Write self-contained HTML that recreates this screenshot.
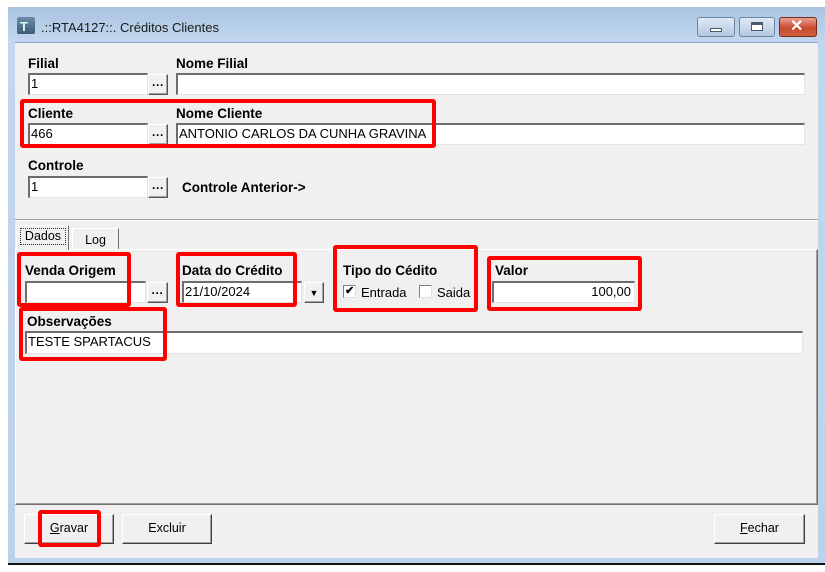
<!DOCTYPE html>
<html><head><meta charset="utf-8"><style>
*{box-sizing:border-box;margin:0;padding:0}
body{width:825px;height:572px;background:#fff;position:relative;overflow:hidden;font-family:"Liberation Sans",sans-serif;font-size:12px;color:#000}
div,span{position:absolute}
.lb{font-weight:bold;font-size:13.5px;line-height:14px;white-space:nowrap}
.in{background:#fff;border-top:2px solid #6d6d6d;border-left:2px solid #6d6d6d;border-right:1px solid #e3e3e3;border-bottom:1px solid #e3e3e3;font-size:13px;line-height:18px;padding-left:1px;white-space:nowrap;overflow:hidden}
.dots{background:#f0f0f0;border:1px solid #fff;border-right:1px solid #555;border-bottom:1px solid #555;box-shadow:inset -1px -1px 0 #a0a0a0;text-align:center;font-weight:bold;line-height:20px;font-size:12px}
.red{border:4px solid #f00;border-radius:3px}
.btn{background:#f0f0f0;border:1px solid #fff;border-right:1px solid #404040;border-bottom:1px solid #404040;box-shadow:inset -1px -1px 0 #a0a0a0;text-align:center;line-height:27px;font-size:12.5px}
.cb{width:13px;height:13px;background:#fff;border-top:1px solid #808080;border-left:1px solid #808080;border-right:1px solid #e0e0e0;border-bottom:1px solid #e0e0e0}
</style></head><body>
<div style="left:8px;top:7px;width:817px;height:556px;background:linear-gradient(#a9c3e0,#c2d7ee 35px,#bcd2ea)"></div>
<div style="left:8px;top:563px;width:817px;height:2px;background:#111"></div>
<div style="left:17px;top:17px;width:18px;height:17px;background:linear-gradient(#6d8aa5,#3e5c78);border-radius:2px"></div>
<span style="left:20px;top:19px;color:#cfe;font-weight:bold;font-size:13px">T</span>
<span style="left:41px;top:20px;font-size:13px;color:#1a1a1a">.::RTA4127::. Créditos Clientes</span>
<div style="left:697px;top:17px;width:38px;height:20px;border:1px solid #6f86a3;border-radius:3px;background:linear-gradient(#dfe9f5,#b3c8e2)"></div>
<div style="left:710px;top:28px;width:12px;height:4px;background:#fff;border:1px solid #4a5a70"></div>
<div style="left:739px;top:17px;width:36px;height:20px;border:1px solid #6f86a3;border-radius:3px;background:linear-gradient(#dfe9f5,#b3c8e2)"></div>
<div style="left:751px;top:22px;width:12px;height:9px;background:#fff;border:1px solid #4a5a70;border-top-width:3px"></div>
<div style="left:779px;top:17px;width:38px;height:20px;border:1px solid #7a2a20;border-radius:3px;background:linear-gradient(#e9a090,#c84a30 55%,#d06040)"></div>
<span style="left:790px;top:17px;color:#fff;font-weight:bold;font-size:16px;line-height:20px">✕</span>
<div style="left:15px;top:42px;width:803px;height:516px;background:#f0f0f0;border-top:1px solid #8fa9c8"></div>

<span class="lb" style="left:28px;top:57px">Filial</span>
<div class="in" style="left:28px;top:73px;width:120px;height:22px">1</div>
<div class="dots" style="left:148px;top:74px;width:20px;height:21px">···</div>
<span class="lb" style="left:176px;top:57px">Nome Filial</span>
<div class="in" style="left:176px;top:73px;width:629px;height:22px"></div>

<span class="lb" style="left:28px;top:107px">Cliente</span>
<div class="in" style="left:28px;top:123px;width:120px;height:22px">466</div>
<div class="dots" style="left:148px;top:124px;width:20px;height:21px">···</div>
<span class="lb" style="left:176px;top:107px">Nome Cliente</span>
<div class="in" style="left:176px;top:123px;width:629px;height:22px">ANTONIO CARLOS DA CUNHA GRAVINA</div>
<div class="red" style="left:20px;top:99px;width:416px;height:49px"></div>

<span class="lb" style="left:28px;top:159px">Controle</span>
<div class="in" style="left:28px;top:176px;width:120px;height:22px">1</div>
<div class="dots" style="left:148px;top:177px;width:20px;height:21px">···</div>
<span class="lb" style="left:182px;top:181px">Controle Anterior-&gt;</span>

<div style="left:15px;top:219px;width:803px;height:1px;background:#a0a0a0"></div>
<div style="left:15px;top:220px;width:803px;height:1px;background:#fff"></div>

<div style="left:72px;top:228px;width:47px;height:21px;border:1px solid #fff;border-right:1px solid #707070;border-bottom:none;background:#f0f0f0;text-align:center;line-height:22px;font-size:12.5px">Log</div>
<div style="left:15px;top:249px;width:803px;height:256px;border:1px solid #fff;border-right:1px solid #707070;border-bottom:1px solid #707070;box-shadow:inset -1px -1px 0 #a0a0a0"></div>
<div style="left:16px;top:225px;width:53px;height:25px;border:1px solid #fff;border-right:1px solid #707070;border-bottom:none;background:#f0f0f0"></div>
<div style="left:20px;top:228px;width:46px;height:17px;border:1px dotted #333;text-align:center;line-height:15px;font-size:12.5px">Dados</div>

<span class="lb" style="left:25px;top:264px">Venda Origem</span>
<div class="in" style="left:25px;top:281px;width:121px;height:22px"></div>
<div class="dots" style="left:147px;top:282px;width:21px;height:21px">···</div>
<div class="red" style="left:17px;top:252px;width:114px;height:55px"></div>

<span class="lb" style="left:182px;top:264px">Data do Crédito</span>
<div class="in" style="left:182px;top:281px;width:120px;height:22px">21/10/2024</div>
<div class="dots" style="left:304px;top:282px;width:20px;height:21px;font-size:9px;line-height:20px">▼</div>
<div class="red" style="left:176px;top:252px;width:121px;height:55px"></div>

<span class="lb" style="left:343px;top:264px">Tipo do Cédito</span>
<div class="cb" style="left:343px;top:285px"></div>
<span style="left:345px;top:284px;font-size:11px;font-weight:bold;line-height:14px">✔</span>
<span style="left:361px;top:285px;font-size:13px">Entrada</span>
<div class="cb" style="left:419px;top:285px"></div>
<span style="left:437px;top:285px;font-size:13px">Saida</span>
<div class="red" style="left:333px;top:245px;width:145px;height:67px"></div>

<span class="lb" style="left:495px;top:264px">Valor</span>
<div class="in" style="left:492px;top:281px;width:143px;height:22px;text-align:right;padding-right:3px">100,00</div>
<div class="red" style="left:487px;top:256px;width:155px;height:55px"></div>

<span class="lb" style="left:27px;top:315px">Observações</span>
<div class="in" style="left:25px;top:331px;width:778px;height:23px">TESTE SPARTACUS</div>
<div class="red" style="left:19px;top:307px;width:148px;height:54px"></div>

<div class="btn" style="left:24px;top:514px;width:90px;height:30px"><u>G</u>ravar</div>
<div class="red" style="left:38px;top:510px;width:63px;height:37px"></div>
<div class="btn" style="left:122px;top:514px;width:90px;height:30px">Excluir</div>
<div class="btn" style="left:714px;top:514px;width:91px;height:30px"><u>F</u>echar</div>
</body></html>
